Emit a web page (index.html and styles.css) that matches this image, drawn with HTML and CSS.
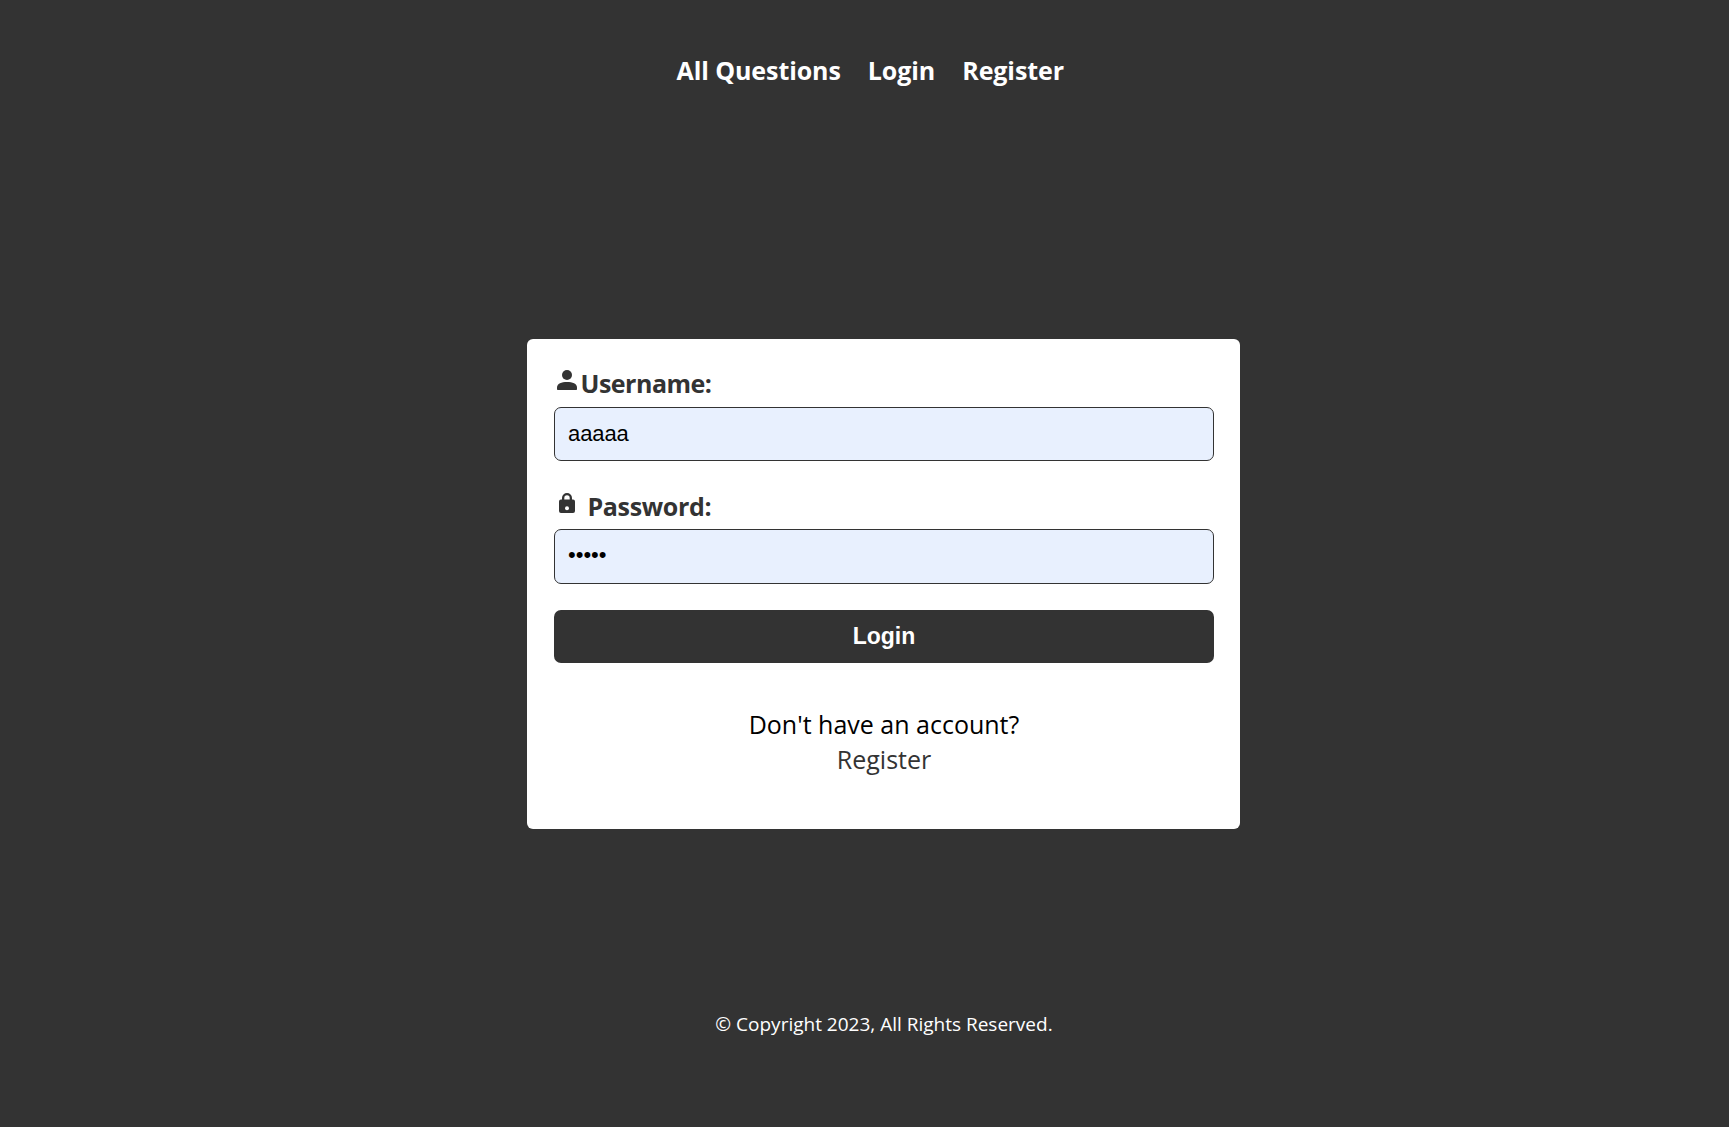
FILE: index.html
```html
<!DOCTYPE html>
<html lang="en">
<head>
<meta charset="utf-8">
<title>Login</title>
<link rel="stylesheet" href="styles.css">
</head>
<body>
<nav class="nav">
  <a class="nav-link" href="#">All Questions</a>
  <a class="nav-link" href="#">Login</a>
  <a class="nav-link" href="#">Register</a>
</nav>
<main class="card">
  <form class="form">
    <label class="label" for="username">
      <svg class="icon" viewBox="0 0 24 24"><circle cx="12" cy="7" r="5"/><path d="M2 21.200v-1.700C2 15.600 6.500 14 12 14s10 1.600 10 5.500v1.700c0 .5-.3.8-.8.8H2.800c-.5 0-.8-.3-.8-.8z"/></svg><span class="username-text">Username:</span>
    </label>
    <input class="input" id="username" type="text" value="aaaaa">
    <label class="label password-label" for="password">
      <svg class="icon" viewBox="0 0 24 24"><path fill-rule="evenodd" d="M7 8.500V7a5 5 0 0 1 10 0v1.500h1a2 2 0 0 1 2 2V20a2 2 0 0 1-2 2H6a2 2 0 0 1-2-2v-9.500a2 2 0 0 1 2-2zM9.300 8.500h5.400V7a2.700 2.700 0 0 0-5.400 0zM12 15.200a2 2 0 1 0 0 4 2 2 0 0 0 0-4z"/></svg><span class="password-text">Password:</span>
    </label>
    <input class="input password" id="password" type="password" value="aaaaa">
    <button class="button" type="button">Login</button>
  </form>
  <p class="prompt">Don't have an account?<br><a class="register" href="#">Register</a></p>
</main>
<footer class="footer">© Copyright 2023, All Rights Reserved.</footer>
</body>
</html>
```
FILE: styles.css
```css
* { box-sizing: border-box; }
body {
  margin: 0;
  height: 1127px;
  overflow: hidden;
  background: #333;
  color: #000;
  font-family: "Open Sans", "Noto Sans", sans-serif;
  font-size: 26px;
  line-height: 36px;
}
a { text-decoration: none; }
.nav {
  display: flex;
  gap: 27px;
  padding: 52px 0 0 676.500px;
  height: 339px;
}
.nav-link { color: #fff; font-weight: 700; font-size: 25px; letter-spacing: -0.080px; height: 36px; white-space: nowrap; }
.card {
  width: 713px;
  height: 490px;
  margin-left: 527px;
  padding: 26px 26px 0 27px;
  background: #fff;
  border-radius: 6px;
}
.form { display: flex; flex-direction: column; }
.label {
  display: flex;
  height: 42px;
  color: #333;
  font-size: 25px;
  font-weight: 700;
  letter-spacing: -0.500px;
}
.icon { width: 24px; height: 24px; margin: 3px 1.500px 0 1px; fill: #333; flex: none; }
.password-label { height: 41px; margin-top: 27px; }
.password-text { margin-left: 7px; letter-spacing: -0.350px; }
.input {
  height: 54px;
  padding: 0 13px;
  border: 1px solid #333;
  border-radius: 7px;
  background: #e8f0fe;
  color: #000;
  font: 22px "Liberation Sans", Arial, sans-serif;
  letter-spacing: -0.100px;
  outline: 0;
}
.password { height: 55px; padding-bottom: 3px; letter-spacing: 0; }
.button {
  height: 53px;
  margin-top: 26px;
  padding: 0 0 1px;
  border: 0;
  border-radius: 7px;
  background: #333;
  color: #fff;
  font: bold 23px "Liberation Sans", Arial, sans-serif;
}
.prompt { margin: 44px 0 0; text-align: center; line-height: 35px; font-weight: 400; font-size: 25px; }
.register { color: #333; }
.footer {
  margin: 181px 0 0 39px;
  text-align: center;
  color: #fff;
  font-size: 19px;
  line-height: 28px;
}
```
